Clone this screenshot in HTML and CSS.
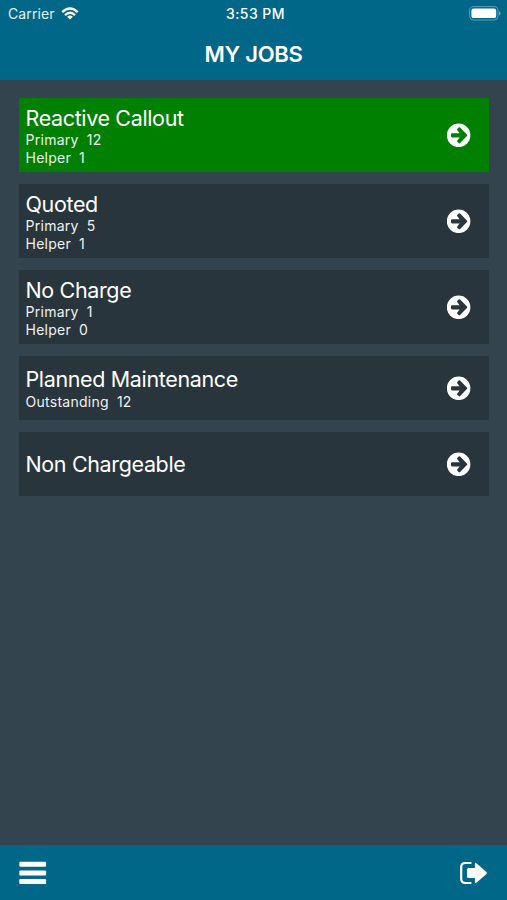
FILE: index.html
```html
<!DOCTYPE html>
<html lang="en">
<head>
<meta charset="utf-8">
<title>My Jobs</title>
<link rel="stylesheet" href="styles.css">
</head>
<body>
<svg width="0" height="0" class="symbols">
  <symbol id="go" viewBox="0 0 24 24">
    <path fill="#fff" fill-rule="evenodd" d="M11.6 .5a11.8 11.8 0 1 1 0 23.6a11.8 11.8 0 1 1 0-23.6zM10.3 7.2L12.6 10.2H5.1Q4 10.2 4 11.3V13.3Q4 14.4 5.1 14.4H12.6L10.3 17.4Q9.7 18.1 10.3 18.7L11.7 20.1Q12.4 20.7 13.1 20.1L19.9 13.1Q20.6 12.3 19.9 11.5L13.1 4.5Q12.4 3.9 11.7 4.5L10.3 5.9Q9.7 6.5 10.3 7.2z"/>
  </symbol>
</svg>
<div class="app">
  <header class="header">
    <div class="status">
      <div class="carrier"><span>Carrier</span>
        <svg class="wifi" width="18" height="13" viewBox="0 0 18 13" fill="none" stroke="#fff" stroke-width="2.3">
          <path d="M1.2 5.2Q9-2.2 16.8 5.2M4 8.1Q9 3.4 14 8.1"/>
          <path fill="#fff" stroke="none" d="M6.2 9.7Q9 7.4 11.8 9.7L9 12.6z"/>
        </svg>
      </div>
      <time class="clock">3:53 PM</time>
      <svg class="battery" width="32" height="15" viewBox="0 0 32 15">
        <rect x=".6" y=".6" width="28.4" height="13.4" rx="4" fill="none" stroke="#5c9db2"/>
        <rect x="2.4" y="2.5" width="24.8" height="9.6" rx="2.2" fill="#fff"/>
        <path d="M30.1 5.2q1.4.7 1.4 2.1t-1.4 2.1z" fill="#79aebf"/>
      </svg>
    </div>
    <h1 class="title">MY JOBS</h1>
  </header>
  <main class="jobs">
    <a class="job active"><div><h2>Reactive Callout</h2><p>Primary<b>12</b></p><p>Helper<b>1</b></p></div><svg class="go"><use href="#go"/></svg></a>
    <a class="job"><div><h2>Quoted</h2><p>Primary<b>5</b></p><p>Helper<b>1</b></p></div><svg class="go"><use href="#go"/></svg></a>
    <a class="job"><div><h2>No Charge</h2><p>Primary<b>1</b></p><p>Helper<b>0</b></p></div><svg class="go"><use href="#go"/></svg></a>
    <a class="job short"><div><h2>Planned Maintenance</h2><p>Outstanding<b>12</b></p></div><svg class="go"><use href="#go"/></svg></a>
    <a class="job short"><div><h2>Non Chargeable</h2></div><svg class="go"><use href="#go"/></svg></a>
  </main>
  <footer class="footer">
    <svg width="28" height="24" viewBox="0 0 28 24" fill="#fff">
      <rect x=".3" y=".7" width="26.8" height="5" rx="1.2"/><rect x=".3" y="9.4" width="26.8" height="5" rx="1.2"/><rect x=".3" y="18.1" width="26.8" height="5" rx="1.2"/>
    </svg>
    <svg width="28" height="24" viewBox="0 0 28 24">
      <path fill="none" stroke="#fff" stroke-width="2.2" stroke-linecap="round" d="M10.6 2H5.4Q1.2 2 1.2 6.2V17.8Q1.2 22 5.4 22H10.6"/>
      <path fill="#fff" d="M8.6 6.9H14.9V2.9Q14.9 1.1 16.4 2.3L26.5 11Q27.4 12 26.5 13L16.4 21.7Q14.9 22.9 14.9 21.1V17.1H8.6Q7 17.1 7 15.5V8.5Q7 6.9 8.6 6.9z"/>
    </svg>
  </footer>
</div>
</body>
</html>
```
FILE: styles.css
```css
* { box-sizing: border-box; }
body { margin: 0; font-family: Inter, "Liberation Sans", sans-serif; color: #fff; }
.symbols { display: none; }
.app { height: 900px; display: flex; flex-direction: column; background: #34444e; }
.header { height: 80px; background: #006788; }
.status { height: 27px; padding: 0 6px 0 8px; display: grid; grid-template-columns: 1fr auto 1fr; align-items: center; font-size: 14px; line-height: 27px; }
.carrier { display: flex; align-items: center; gap: 6px; color: #e5f0f4; letter-spacing: .1px; }
.clock { font-weight: 500; font-size: 14px; letter-spacing: .45px; padding-left: 2px; }
.battery { justify-self: end; }
.title { margin: 0; text-align: center; font-size: 22px; line-height: 54px; font-weight: 600; letter-spacing: -.3px; }
.jobs { flex: 1; padding: 18px 18px 0 19px; display: flex; flex-direction: column; gap: 12px; }
.job { height: 74px; padding: 0 18px 0 6.5px; display: flex; align-items: center; justify-content: space-between; background: #29353c; }
.active { background: #008000; }
.short { height: 64px; }
.job h2 { margin: 0; font-size: 21.5px; line-height: 26px; font-weight: 400; letter-spacing: -.36px; white-space: nowrap; }
.job p { margin: 0; font-size: 14px; line-height: 17.5px; letter-spacing: .27px; color: #eef2f3; position: relative; top: .6px; }
.job b { font-weight: 400; margin-left: 8px; }
.go { width: 24px; height: 24px; }
.footer { height: 55px; padding: 1px 19px 0; display: flex; align-items: center; justify-content: space-between; background: #006788; }
```
